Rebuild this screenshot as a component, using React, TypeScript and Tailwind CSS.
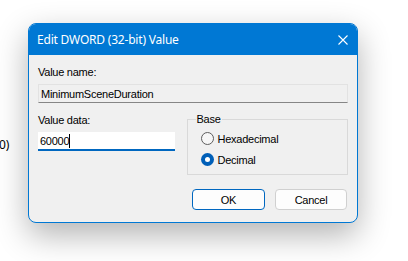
import React from "react";

function Radio({ checked, label }: { checked?: boolean; label: string }) {
  return (
    <label className="flex items-center h-[21px] gap-[4px]">
      {checked ? (
        <span className="flex items-center justify-center w-[13px] h-[13px] rounded-full bg-[#005fb8]">
          <span className="w-[5px] h-[5px] rounded-full bg-white" />
        </span>
      ) : (
        <span className="w-[13px] h-[13px] rounded-full border border-[#5d5d5d] bg-[#f6f6f6]" />
      )}
      <span>{label}</span>
    </label>
  );
}

export default function App() {
  return (
    <div
      className="relative w-[408px] h-[261px] overflow-hidden bg-white pt-[23px] pl-[28px] text-[11px] tracking-[-0.25px] text-black leading-[16px]"
      style={{ fontFamily: '"Liberation Sans", Arial, sans-serif' }}
    >
      {/* text from the window behind */}
      <span
        className="absolute left-[-1px] top-[137px] text-[12px] tracking-normal"
        style={{ fontFamily: '"Noto Sans", sans-serif' }}
      >
        0)
      </span>

      {/* Dialog */}
      <div className="relative w-[330px] h-[200px] rounded-[8px] border border-[#0078d4] bg-[#f0f0f0] shadow-[0_12px_32px_rgba(0,0,0,0.3)] overflow-hidden flex flex-col">
        {/* Title bar */}
        <div className="flex items-center justify-between h-[31px] bg-[#0078d4] text-white pl-[8px] pr-[9px] shrink-0">
          <span
            className="text-[12px] tracking-[-0.2px]"
            style={{ fontFamily: '"Noto Sans", sans-serif' }}
          >
            Edit DWORD (32-bit) Value
          </span>
          <svg width="10" height="10" viewBox="0 0 10 10">
            <path d="M0.5 0.5 L9.5 9.5 M9.5 0.5 L0.5 9.5" stroke="white" strokeWidth="1.1" />
          </svg>
        </div>

        {/* Body */}
        <div className="flex flex-col px-[9px] pt-[9px]">
          <div>Value name:</div>
          <div className="mt-[4px] h-[19px] w-[310px] border border-[#e2e2e2] border-b-[#868686] bg-[#f0f0f0] pl-[2px] flex items-center">
            MinimumSceneDuration
          </div>

          <div className="flex items-start mt-[9px] gap-[12px]">
            <div className="flex flex-col w-[137px]">
              <div>Value data:</div>
              <div className="mt-[4px] h-[19px] bg-white border-b-2 border-[#0067c0] pl-[2px] flex items-center">
                60000
                <span className="inline-block w-[1px] h-[14px] bg-black" />
              </div>
            </div>

            <div className="relative mt-[7px] w-[162px] h-[56px] border border-[#d9d9d9] pl-[13px] pt-[8px]">
              <span className="absolute left-[8px] top-[-9px] px-[1px] bg-[#f0f0f0]">Base</span>
              <div className="flex flex-col">
                <Radio label="Hexadecimal" />
                <Radio checked label="Decimal" />
              </div>
            </div>
          </div>

          <div className="flex justify-end gap-[10px] mt-[14px] pr-[1px]">
            <button className="w-[73px] h-[21px] rounded-[4px] border border-[#0067c0] bg-[#fdfdfd] flex items-center justify-center">
              OK
            </button>
            <button className="w-[72px] h-[21px] rounded-[4px] border border-[#d0d0d0] bg-[#fdfdfd] flex items-center justify-center">
              Cancel
            </button>
          </div>
        </div>
      </div>
    </div>
  );
}
